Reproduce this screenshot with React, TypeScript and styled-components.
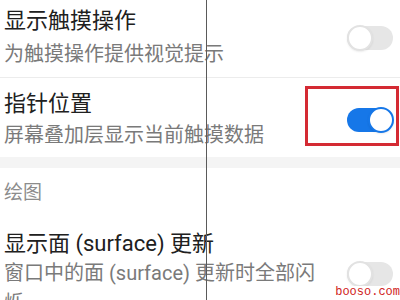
import React from "react";
import styled, { createGlobalStyle } from "styled-components";

const GlobalStyle = createGlobalStyle`
  html, body {
    margin: 0;
    padding: 0;
    background: #ffffff;
  }
  body {
    font-family: Roboto, "Noto Sans CJK SC", sans-serif;
  }
`;

const Page = styled.div`
  position: relative;
  width: 400px;
  height: 300px;
  overflow: hidden;
  background: #ffffff;
`;

const Row = styled.div<{ $top: number; $bottom: number; $divider?: boolean }>`
  position: relative;
  display: flex;
  align-items: center;
  gap: 24px;
  padding: ${({ $top, $bottom }) => `${$top}px 7px ${$bottom}px 4px`};
  border-bottom: ${({ $divider }) => ($divider ? "1px solid #ececec" : "none")};
`;

const TextBlock = styled.div<{ $gap: number }>`
  flex: 1;
  display: flex;
  flex-direction: column;
  gap: ${({ $gap }) => $gap}px;
`;

const Title = styled.div`
  font-size: 22px;
  line-height: 28px;
  color: #202020;
`;

const Summary = styled.div`
  font-size: 20px;
  line-height: 30px;
  color: #7a7a7a;
`;

const SectionBand = styled.div`
  height: 11px;
  background: #f4f4f4;
`;

const SectionHeader = styled.div`
  padding: 13px 4px 0 4px;
  font-size: 19px;
  line-height: 24px;
  color: #8c8c8c;
`;

const Track = styled.div<{ $on: boolean }>`
  flex: none;
  position: relative;
  width: 46px;
  height: 24px;
  border-radius: 12px;
  background: ${({ $on }) => ($on ? "#1677e8" : "#e6e6e6")};
`;

const Thumb = styled.div<{ $on: boolean }>`
  position: absolute;
  top: -1px;
  left: ${({ $on }) => ($on ? "21px" : "0")};
  width: 22px;
  height: 22px;
  border-radius: 50%;
  background: #ffffff;
  border: 2px solid ${({ $on }) => ($on ? "#1677e8" : "#e2e2e2")};
  box-shadow: 0 1px 2px rgba(0, 0, 0, 0.08);
`;

const Highlight = styled.div`
  position: absolute;
  top: 8px;
  right: 1px;
  width: 88px;
  height: 54px;
  border: 3px solid #d42a33;
  pointer-events: none;
`;

const PointerLine = styled.div`
  position: absolute;
  top: 0;
  bottom: 0;
  left: 206px;
  width: 1px;
  background: #5a5a5a;
  pointer-events: none;
`;

const Watermark = styled.div`
  position: absolute;
  right: 0;
  bottom: 2px;
  font-family: "Liberation Mono", monospace;
  font-size: 12px;
  line-height: 12px;
  color: #d01c1c;
  background: #ffffff;
`;

const Switch = ({ on }: { on: boolean }) => (
  <Track $on={on}>
    <Thumb $on={on} />
  </Track>
);

export default function App() {
  return (
    <Page>
      <GlobalStyle />
      <Row $top={7} $bottom={8} $divider>
        <TextBlock $gap={4}>
          <Title>显示触摸操作</Title>
          <Summary>为触摸操作提供视觉提示</Summary>
        </TextBlock>
        <Switch on={false} />
      </Row>
      <Row $top={12} $bottom={7}>
        <TextBlock $gap={2}>
          <Title>指针位置</Title>
          <Summary>屏幕叠加层显示当前触摸数据</Summary>
        </TextBlock>
        <Switch on={true} />
        <Highlight />
      </Row>
      <SectionBand />
      <SectionHeader>绘图</SectionHeader>
      <Row $top={25} $bottom={0}>
        <TextBlock $gap={-6}>
          <Title>显示面 (surface) 更新</Title>
          <Summary>窗口中的面 (surface) 更新时全部闪烁</Summary>
        </TextBlock>
        <Switch on={false} />
      </Row>
      <PointerLine />
      <Watermark>booso.com</Watermark>
    </Page>
  );
}
